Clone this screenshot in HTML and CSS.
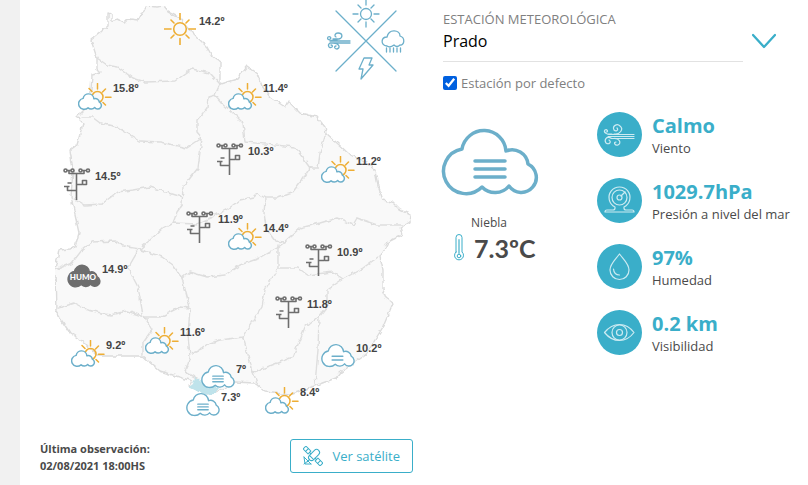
FILE: index.html
```html
<!doctype html>
<html lang="es">
<head>
    <meta charset="UTF-8">
    <meta name="viewport" content="width=device-width, initial-scale=1.0">
    <title>Estado del tiempo</title>
    <link rel="stylesheet" href="styles.css">
</head>
<body>
<!-- iconos -->
<svg class="sprites" aria-hidden="true">
    <symbol id="nube" viewBox="0 0 98 70">
        <path d="M41 60A22.5 22.5 0 1 1 21 22A22.2 22.2 0 0 1 65 24A16 16 0 0 1 87 37A15 15 0 1 1 68 59A18 18 0 0 1 41 60Z"/>
    </symbol>
    <symbol id="niebla" viewBox="0 0 98 70">
        <use href="#nube" width="98" height="70"/>
        <path d="M34 34H64M34 42H64M34 50H64"/>
    </symbol>
    <symbol id="neblina" viewBox="0 0 98 70">
        <use href="#nube" width="98" height="70"/>
        <path d="M32 37H63M32 48H63"/>
    </symbol>
    <symbol id="sol" viewBox="0 0 32 32">
        <circle cx="16" cy="16" r="6.3"/>
        <path d="M16 0V6.5M16 25.5V32M0 16H7M25 16H32M7 7L10 10M22 22L25 25M25 7L22 10M10 22L7 25"/>
    </symbol>
    <symbol id="parcial" viewBox="0 0 34 28">
        <g class="rayos">
            <circle cx="19.5" cy="14" r="5.5"/>
            <path d="M19.5 .5V6M11 5.5L14 8.5M24.5 9L27.5 6M27.5 14.3H33M25 19.5L27.5 22"/>
        </g>
        <g class="nube-chica" transform="translate(0 10) scale(.245)">
            <path d="M41 60A22.5 22.5 0 1 1 21 22A22.2 22.2 0 0 1 65 24A16 16 0 0 1 87 37A15 15 0 1 1 68 59A18 18 0 0 1 41 60Z"/>
        </g>
    </symbol>
    <symbol id="torre" viewBox="0 0 28 33">
        <circle cx="2.5" cy="2.5" r="1.5"/>
        <circle cx="9.5" cy="2.5" r="1.5"/>
        <circle cx="17.5" cy="2.5" r="1.5"/>
        <circle cx="25" cy="2.5" r="1.5"/>
        <path d="M4 2.5H8M19 2.5H23.5M6 2.5V5.5H21V2.5M13.5 5.5V32M13.5 16.5H19M13.5 22.5H4.5V18.5M1 18.5H6.5M4.5 15H8.5"/>
        <rect x="19.5" y="12.5" width="4" height="4"/>
    </symbol>
</svg>

<main class="panel">
    <section class="col-mapa">
        <div class="mapa">
            <svg class="uruguay" viewBox="40 0 373 430" aria-hidden="true">
                <defs>
                    <filter id="costa" x="0" y="0" width="1" height="1">
                        <feTurbulence type="fractalNoise" baseFrequency=".22" numOctaves="1" seed="4"/>
                        <feDisplacementMap in="SourceGraphic" scale="5" xChannelSelector="R" yChannelSelector="G"/>
                    </filter>
                </defs>
                <g filter="url(#costa)">
                    <path class="pais" d="M108 13L112 15L112 21L118 19L124 22L130 19L138 20L142 12L148 6L156 7L163 6L168 12L180 18L193 33L207 47L212 56L220 62L220 84L237 79L242 72L247 66L257 73L262 86L270 97L285 107L288 101L292 105L300 113L317 117L325 127L326 133L348 153L366 163L375 170L378 186L383 200L392 202L400 210L411 215L410 222L400 228L402 235L388 242L380 257L383 270L383 290L386 298L393 303L383 327L367 353L352 364L340 373L336 378L317 385L290 395L265 392L255 383L235 382L214 393L205 394L189 386L192 381L160 371L142 356L97 356L85 343L70 333L56 312L55 270L59 250L69 249L75 247L79 233L71 197L73 170L70 150L77 145L83 123L77 117L90 104L92 75L100 73L97 70L97 58L91 40L108 26Z"/>
                    <path class="limite" d="M97 58L107 65L118 67L133 78L145 82L175 81L192 69L210 73L220 84"/>
                    <path class="limite" d="M220 84L215 95L208 97L207 108L197 120L197 132L202 138L198 168L183 187L182 205L177 212L173 223"/>
                    <path class="limite" d="M215 95L222 103L233 113L243 123L245 142L295 147L310 168L318 168L320 153L326 133"/>
                    <path class="limite" d="M82 117L92 117L100 123L117 127L140 141L160 142L187 148L202 138"/>
                    <path class="limite" d="M72 197L85 205L102 204L117 192L133 190L150 187L182 197"/>
                    <path class="limite" d="M55 270L72 263L82 250L92 242L115 241L127 247L140 249L150 240L163 228L173 223L197 224L212 217L228 209L240 200L253 197L257 193L265 198L278 198L292 193L302 180L310 168"/>
                    <path class="limite" d="M139 249L128 268L138 287L143 315L152 330L143 343L143 355"/>
                    <path class="limite" d="M139 249L162 257L173 265L182 278L190 308L188 335L190 357L185 372L197 378"/>
                    <path class="limite" d="M182 278L190 272L207 277L225 275L240 265L260 258L277 248L285 242"/>
                    <path class="limite" d="M55 309L75 303L88 310L110 315L127 311L145 317L160 317L180 307L190 308"/>
                    <path class="limite" d="M192 353L203 348L210 343L220 340L243 337"/>
                    <path class="limite" d="M278 245L278 268L265 290L262 307L243 337L253 372L257 383"/>
                    <path class="limite" d="M265 198L264 214L267 230L275 241L284 242L300 228L320 223L337 218L353 225L357 218L377 225L402 225"/>
                    <path class="limite" d="M278 268L298 268L308 275L333 272L343 279L363 268L378 257"/>
                    <path class="limite" d="M343 279L327 290L327 307L319 317L318 350L315 384"/>
                    <path class="limite" d="M253 372L267 367L293 357L305 327L319 316"/>
                    <path class="capital" d="M189 387L193 384L195 377L200 381L206 382L218 388L214 394L202 395L197 391Z"/>
                </g>
            </svg>

            <svg class="rosa" viewBox="326 0 80 82" aria-hidden="true">
                <path d="M336 11L396 71M396 11L336 71"/>
                <circle cx="366" cy="14" r="5.5"/>
                <path d="M366 0V5M366 22V27M353 14H358M374 14H379M358 5L361 8M374 5L371 8M358 22L361 19M374 22L371 19"/>
                <path d="M330 41H350M330 43H350M333 39H339C343 38 343 33 338 33C335 33 334 36 336 37M337 40C331 41 326 40 328 37C330 36 332 38 330 39M330 43C327 45 329 49 332 47C333 46 332 45 331 45M333 43C339 43 341 48 337 49C334 49 334 46 336 46"/>
                <path d="M387 46C380 45 381 37 387 37C389 28 400 30 400 36C406 38 404 46 400 45Q397 48 394 45Q390 48 387 46Z"/>
                <path d="M386.5 48V52M390 48V52M393.5 48V52M397 48V52M400.5 48V52"/>
                <path d="M364 58L372 58L369 65L373 65L361 79L363 69L359 69Z"/>
            </svg>

            <div class="pin artigas"><svg class="ico-sol"><use href="#sol"/></svg><span>14.2º</span></div>
            <div class="pin salto"><svg class="ico-parcial"><use href="#parcial"/></svg><span>15.8º</span></div>
            <div class="pin rivera"><svg class="ico-parcial"><use href="#parcial"/></svg><span>11.4º</span></div>
            <div class="pin tacuarembo"><svg class="ico-torre"><use href="#torre"/></svg><span>10.3º</span></div>
            <div class="pin melo"><svg class="ico-parcial"><use href="#parcial"/></svg><span>11.2º</span></div>
            <div class="pin paysandu"><svg class="ico-torre"><use href="#torre"/></svg><span>14.5º</span></div>
            <div class="pin toros"><svg class="ico-torre"><use href="#torre"/></svg><span>11.9º</span></div>
            <div class="pin durazno"><svg class="ico-parcial"><use href="#parcial"/></svg><span>14.4º</span></div>
            <div class="pin treinta"><svg class="ico-torre"><use href="#torre"/></svg><span>10.9º</span></div>
            <div class="pin lavalleja"><svg class="ico-torre"><use href="#torre"/></svg><span>11.8º</span></div>
            <div class="pin mercedes">
                <svg class="ico-humo" viewBox="0 0 34 24"><use href="#nube" width="34" height="24"/><text x="16" y="16">HUMO</text></svg>
                <span>14.9º</span>
            </div>
            <div class="pin sanjose"><svg class="ico-parcial"><use href="#parcial"/></svg><span>11.6º</span></div>
            <div class="pin colonia"><svg class="ico-parcial"><use href="#parcial"/></svg><span>9.2º</span></div>
            <div class="pin carrasco"><svg class="ico-niebla"><use href="#niebla"/></svg><span>7º</span></div>
            <div class="pin rocha"><svg class="ico-niebla"><use href="#neblina"/></svg><span>10.2º</span></div>
            <div class="pin prado"><svg class="ico-niebla"><use href="#niebla"/></svg><span>7.3º</span></div>
            <div class="pin maldonado"><svg class="ico-parcial"><use href="#parcial"/></svg><span>8.4º</span></div>
        </div>

        <div class="pie">
            <p class="observacion">Última observación:<br>02/08/2021 18:00HS</p>
            <button type="button" class="btn-satelite">
                <svg viewBox="0 0 20 20" aria-hidden="true">
                    <g transform="rotate(45 10 10)">
                        <rect x="-2" y="8" width="7" height="4"/>
                        <path d="M1.5 8V12M5 10H7M13 10H15M18.5 8V12"/>
                        <rect x="15" y="8" width="7" height="4"/>
                        <rect x="7" y="2" width="6" height="13" rx="3"/>
                        <path d="M7 12H13M10 15V18"/>
                    </g>
                    <path d="M1 11L8 18M1 11L2 18L8 18M1 18L5 15"/>
                </svg>
                Ver satélite
            </button>
        </div>
    </section>

    <section class="col-datos">
        <label class="titulo" for="estacion">ESTACIÓN METEOROLÓGICA</label>
        <div class="selector">
            <select id="estacion">
                <option selected>Prado</option>
            </select>
            <svg viewBox="0 0 24 16" aria-hidden="true"><path d="M1 2L12 14L23 2"/></svg>
        </div>
        <div class="defecto">
            <input type="checkbox" id="defecto" checked>
            <label for="defecto">Estación por defecto</label>
        </div>

        <div class="actual">
            <div class="estado">
                <svg class="ico-estado" aria-hidden="true"><use href="#niebla"/></svg>
                <p class="nombre">Niebla</p>
                <p class="temperatura">
                    <svg viewBox="0 0 12 28" aria-hidden="true">
                        <path d="M3 18V3.5A3 3 0 0 1 9 3.5V18A4.5 4.5 0 1 1 3 18Z"/>
                        <path class="mercurio" d="M6 19V6"/>
                        <circle cx="6" cy="22" r="1.8"/>
                    </svg>
                    7.3ºC
                </p>
            </div>

            <ul class="medidas">
                <li>
                    <svg viewBox="0 0 45 45" aria-hidden="true">
                        <circle class="fondo" cx="22.5" cy="22.5" r="22.5"/>
                        <path d="M11 22.5H37M11 24.5H37M14 26.5H37M17 22C23 23 27 17 23 14C20 11 15 14 17 18C19 20 22 18 20 16M15 22C9 23 6 20 8 18C10 17 12 20 9 20M14 26C9 24 7 28 9 31C12 33 15 30 12 28M17 26.5C22 26 25 31 21 33C18 34 16 30 19 30"/>
                    </svg>
                    <div><strong>Calmo</strong><span>Viento</span></div>
                </li>
                <li>
                    <svg viewBox="0 0 45 45" aria-hidden="true">
                        <circle class="fondo" cx="22.5" cy="22.5" r="22.5"/>
                        <path d="M18 29A10.5 10.5 0 1 1 27 29V30Q27 32 29 32H35Q37 32 37 34H8Q8 32 10 32H16Q18 32 18 30Z"/>
                        <circle cx="22.5" cy="19.5" r="7.5"/>
                        <circle cx="22.5" cy="19.5" r="2.5"/>
                        <path d="M24 18L28 14"/>
                    </svg>
                    <div><strong>1029.7hPa</strong><span>Presión a nivel del mar</span></div>
                </li>
                <li>
                    <svg viewBox="0 0 45 45" aria-hidden="true">
                        <circle class="fondo" cx="22.5" cy="22.5" r="22.5"/>
                        <path d="M22.5 10C18 16 13 20 13 26A9.3 9.3 0 0 0 32 26C32 20 27 16 22.5 10ZM16.5 25Q17 31 22.5 31"/>
                    </svg>
                    <div><strong>97%</strong><span>Humedad</span></div>
                </li>
                <li>
                    <svg viewBox="0 0 45 45" aria-hidden="true">
                        <circle class="fondo" cx="22.5" cy="22.5" r="22.5"/>
                        <path d="M7.5 22.5Q14 14.5 22.5 14.5T37 22.5Q31 30.5 22.5 30.5T7.5 22.5Z"/>
                        <circle cx="22.5" cy="22.5" r="7.5"/>
                        <circle cx="22.5" cy="22.5" r="3"/>
                    </svg>
                    <div><strong>0.2 km</strong><span>Visibilidad</span></div>
                </li>
            </ul>
        </div>
    </section>
</main>
</body>
</html>
```

FILE: styles.css
```css
* {
    margin: 0;
    padding: 0;
    box-sizing: border-box;
}

body {
    background: #f1f1f1;
    font-family: "Open Sans", "Noto Sans", sans-serif;
    font-size: 13px;
    color: #4a4a4a;
}

svg {
    fill: none;
    flex: none;
    stroke-linecap: round;
    stroke-linejoin: round;
}

.sprites {
    position: absolute;
    width: 0;
    height: 0;
}

.panel {
    display: flex;
    gap: 30px;
    min-height: 100vh;
    margin-left: 20px;
    padding-left: 20px;
    background: #fff;
}

.col-mapa {
    flex: none;
}

/* mapa */
.mapa {
    position: relative;
    width: 373px;
    height: 430px;
}

.uruguay {
    display: block;
    width: 100%;
    height: 100%;
}

.pais {
    fill: #f9f9f9;
    stroke: #dcdcdc;
    stroke-width: 1.4;
}

.limite {
    stroke: #dedede;
    stroke-width: 1.4;
}

.capital {
    fill: #bfe3eb;
}

.rosa {
    position: absolute;
    left: 286px;
    top: 0;
    width: 80px;
    height: 82px;
    stroke: #6cafca;
    stroke-width: 1.3;
}

.pin {
    position: absolute;
    display: flex;
    gap: 1px;
    font: bold 11px/10px "Liberation Sans", Arial, sans-serif;
    color: #444;
}

.ico-sol {
    width: 32px;
    height: 32px;
    margin-right: 2px;
    stroke: #eeae35;
    stroke-width: 1.6;
}

.ico-parcial {
    width: 34px;
    height: 28px;
}

.rayos {
    stroke: #eeae35;
    stroke-width: 1.5;
}

.nube-chica {
    fill: #fff;
    stroke: #6cafca;
    stroke-width: 6;
}

.ico-torre {
    width: 28px;
    height: 33px;
    margin-right: 3px;
    stroke: #6e6e6e;
    stroke-width: 1.6;
    stroke-linecap: butt;
}

.ico-niebla {
    width: 34px;
    height: 25px;
    fill: #fff;
    stroke: #6cafca;
    stroke-width: 4;
}

.ico-humo {
    width: 34px;
    height: 24px;
    fill: #6e6e6e;
    stroke: #6e6e6e;
    stroke-width: 4;
}

.ico-humo text {
    fill: #fff;
    stroke: none;
    font: 900 8px Lato, sans-serif;
    text-anchor: middle;
}

.artigas { left: 124px; top: 13px; }
.salto { left: 38px; top: 83px; }
.rivera { left: 188px; top: 83px; }
.tacuarembo { left: 176px; top: 143px; }
.melo { left: 281px; top: 156px; }
.paysandu { left: 23px; top: 168px; }
.toros { left: 146px; top: 211px; }
.durazno { left: 188px; top: 223px; }
.treinta { left: 265px; top: 244px; }
.lavalleja { left: 235px; top: 296px; }
.mercedes { left: 27px; top: 264px; }
.sanjose { left: 105px; top: 327px; }
.colonia { left: 31px; top: 340px; }
.carrasco { left: 161px; top: 364px; }
.rocha { left: 281px; top: 343px; }
.prado { left: 146px; top: 392px; }
.maldonado { left: 225px; top: 387px; }

.artigas span,
.tacuarembo span,
.paysandu span,
.toros span,
.treinta span,
.lavalleja span {
    margin-top: 3px;
}

/* pie */
.pie {
    display: flex;
    justify-content: space-between;
    margin-top: 9px;
}

.observacion {
    padding-top: 1px;
    font-size: 11px;
    font-weight: bold;
    line-height: 17px;
}

.btn-satelite {
    display: flex;
    align-items: center;
    gap: 9px;
    height: 34px;
    padding: 0 12px;
    border: 1px solid #3aaec9;
    border-radius: 3px;
    background: #fff;
    font: 13px "Open Sans", sans-serif;
    color: #3aaec9;
}

.btn-satelite svg {
    width: 20px;
    height: 20px;
    stroke: #3aaec9;
}

/* datos de la estación */
.col-datos {
    flex: 1;
    min-width: 0;
    padding-top: 9px;
}

.titulo {
    display: block;
    line-height: 20px;
    color: #808080;
}

.selector {
    display: flex;
    gap: 9px;
    padding-right: 32px;
}

.selector select {
    flex: 1;
    height: 33px;
    padding-bottom: 8px;
    border: 0;
    border-bottom: 1px solid #e2e2e2;
    background: #fff;
    appearance: none;
    font: 16px "Open Sans", sans-serif;
    color: #000;
}

.selector svg {
    width: 24px;
    height: 16px;
    margin-top: 4px;
    stroke: #3aaec9;
    stroke-width: 2.3;
}

.defecto {
    display: flex;
    align-items: center;
    gap: 4px;
    margin-top: 11px;
    line-height: 20px;
    color: #808080;
}

.defecto input {
    width: 14px;
    height: 14px;
    accent-color: #0060df;
}

.actual {
    display: flex;
    gap: 60px;
    margin-top: 19px;
    margin-left: -2px;
}

.estado {
    flex: none;
    width: 96px;
    padding-top: 15px;
}

.ico-estado {
    display: block;
    width: 98px;
    height: 70px;
    stroke: #6cafca;
    stroke-width: 3.5;
}

.nombre {
    margin-top: 16px;
    font-size: 12px;
    line-height: 20px;
    text-align: center;
}

.temperatura {
    display: flex;
    align-items: center;
    gap: 9px;
    padding-left: 12px;
    font: bold 25px/30px Lato, sans-serif;
}

.temperatura svg {
    width: 12px;
    height: 28px;
    stroke: #3aaec9;
}

.temperatura .mercurio {
    stroke: #8fd0df;
    stroke-width: 2;
}

.medidas {
    display: grid;
    gap: 20px;
    align-content: start;
    list-style: none;
}

.medidas li {
    display: flex;
    gap: 10px;
    height: 45px;
    white-space: nowrap;
}

.medidas svg {
    width: 45px;
    height: 45px;
    stroke: #cdebf2;
    stroke-width: 1.2;
}

.medidas li + li {
    margin-top: 1px;
}

.medidas .fondo {
    fill: #3aaec9;
    stroke: none;
}

.medidas strong,
.medidas span {
    display: block;
}

.medidas strong {
    font-size: 20px;
    line-height: 28px;
    color: #3aaec9;
}

.medidas span {
    line-height: 17px;
}
```
